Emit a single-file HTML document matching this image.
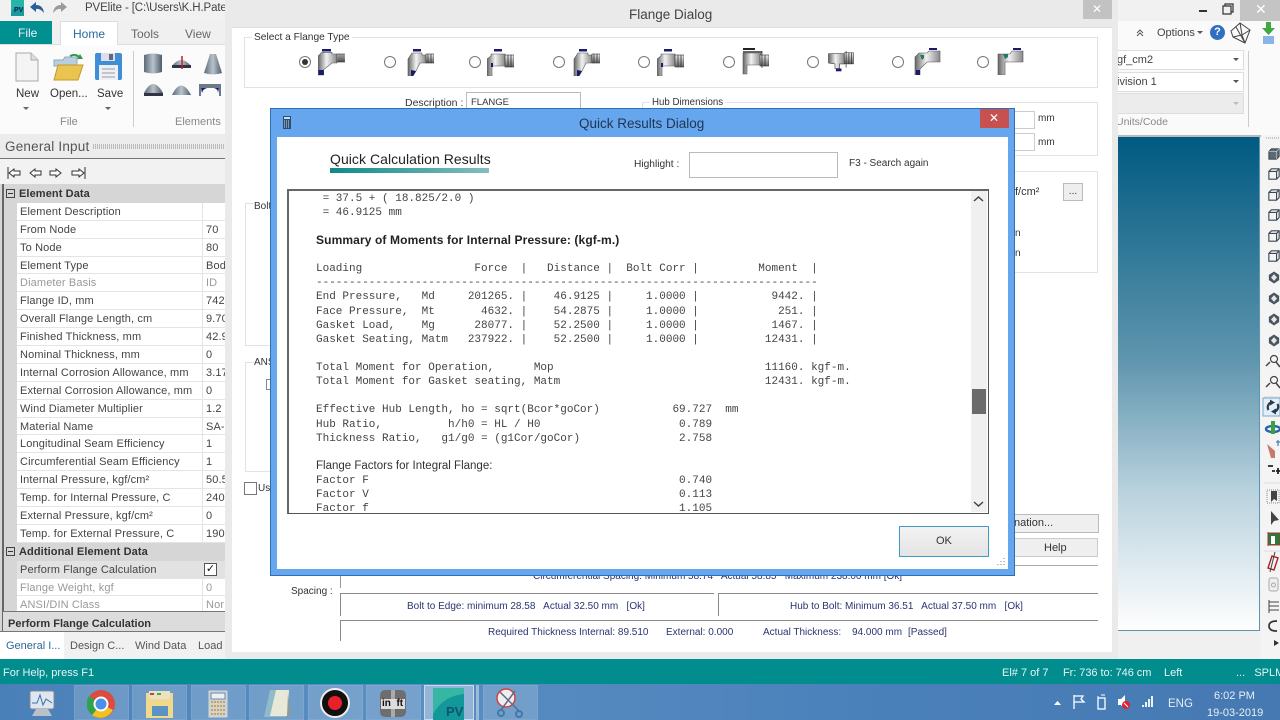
<!DOCTYPE html>
<html><head><meta charset="utf-8"><title>Quick Results Dialog</title>
<style>
html,body{margin:0;padding:0;width:1280px;height:720px;overflow:hidden;background:#f0f0f0}
body{position:relative;font:10.2px/12px "Liberation Sans",sans-serif;color:#333;filter:blur(.3px)}
div,span,svg,pre{position:absolute}
.t{white-space:pre;line-height:12px}
.b{box-sizing:border-box}
.r{position:relative;height:17.9px;box-sizing:border-box;border-bottom:1px solid #e4e4e4;background:#fff;margin-left:13px;width:208px;font-size:11px}
.r span{top:3px;white-space:pre;letter-spacing:.13px;color:#444}
.r .l{left:3px}.r .v{left:189px;width:19px;overflow:hidden}
.r i{position:absolute;left:185px;top:0;bottom:0;width:1px;background:#e4e4e4}
.g span{color:#999}
.h{position:relative;height:17.9px;background:#d6d6d6;width:220px;font-weight:bold;font-size:11px}
.h span{left:15px;top:3px;color:#333;white-space:pre;letter-spacing:.1px}
.h b{position:absolute;left:2px;top:4px;width:9px;height:9px;border:1px solid #444;box-sizing:border-box}
.h b:after{content:"";position:absolute;left:1px;top:3px;width:5px;height:1px;background:#333}
.grp{box-sizing:border-box;border:1px solid #e2e2e2;background:#fff}
.rad{width:12px;height:12px;border:1px solid #777;border-radius:50%;box-sizing:border-box;background:#fff;top:56px}
.mono{left:27px;top:.5px;margin:0;font:11px/14.13px "Liberation Mono",monospace;color:#444;white-space:pre}
.tb{top:685px;width:55px;height:35px;background:rgba(255,255,255,.17);box-shadow:inset 0 0 0 1px rgba(255,255,255,.08)}
.n{color:#2b3472;font-size:10px}
.hl{background:#8a8a8a}
.w{color:#e8f4f4;font-size:11px}
.u{font-size:11px}
</style></head><body>
<svg width="0" height="0" style="left:0;top:0">
<defs>
<linearGradient id="gm" x1="0" x2="1" y1="0" y2="0"><stop offset="0" stop-color="#666"/><stop offset=".45" stop-color="#f2f2f2"/><stop offset="1" stop-color="#888"/></linearGradient>
<linearGradient id="gy" x1="0" x2="0" y1="0" y2="1"><stop offset="0" stop-color="#eee"/><stop offset="1" stop-color="#666"/></linearGradient>
<symbol id="f1" viewBox="0 0 27 27"><rect x="4" y="0" width="9" height="2.5" fill="#1a1a6e"/><path d="M0 7L4 3.300H14V5H19V14H14L5.700 20.700V26H0Z" fill="url(#gm)" stroke="#555" stroke-width=".6"/><rect x="19" y="5" width="8" height="8" fill="url(#gy)" stroke="#333" stroke-width=".6"/><path d="M21 5V13M23 5V13M25 5V13" stroke="#222" stroke-width=".7"/><path d="M.5 26V21H5.700V26Z" fill="#1a1a6e"/></symbol>
<symbol id="f2" viewBox="0 0 27 27"><rect x="6" y="0" width="8" height="2.5" fill="#1a1a6e"/><path d="M1 10L5 4H15V6H19V14H13L9 22 6 27H1Z" fill="url(#gm)" stroke="#555" stroke-width=".6"/><rect x="19" y="5" width="8" height="9" fill="url(#gy)" stroke="#333" stroke-width=".6"/><path d="M21 5V14M24 5V14" stroke="#222" stroke-width=".7"/><path d="M4 27V21L9 22 6 27Z" fill="#1a1a6e"/></symbol>
<symbol id="f3" viewBox="0 0 27 27"><rect x="7" y="0" width="8" height="2.5" fill="#1a1a6e"/><path d="M0 27V10L4 7V5H18V17H5V27Z" fill="url(#gm)" stroke="#555" stroke-width=".6"/><rect x="18" y="6" width="9" height="12" fill="url(#gy)" stroke="#333" stroke-width=".6"/><path d="M21 6V18M24 6V18" stroke="#222" stroke-width=".7"/><rect x="4" y="14" width="2" height="4" fill="#1a1a6e"/></symbol>
<symbol id="f4" viewBox="0 0 27 27"><rect x="1" y="0" width="12" height="2" fill="#222"/><rect x="1" y="3" width="19" height="2" fill="#666"/><path d="M1 5H19V17H5V26H1Z" fill="url(#gm)" stroke="#555" stroke-width=".6"/><rect x="18" y="7" width="9" height="11" fill="url(#gy)" stroke="#333" stroke-width=".6"/><path d="M20 3V20M23 7V18" stroke="#222" stroke-width=".7"/></symbol>
<symbol id="f5" viewBox="0 0 27 27"><path d="M0 4H17V15H12V20H7V15L0 14Z" fill="url(#gm)" stroke="#444" stroke-width=".7"/><rect x="17" y="3" width="10" height="12" fill="url(#gy)" stroke="#333" stroke-width=".6"/><path d="M19 1V19M22 3V15M25 3V15" stroke="#222" stroke-width=".7"/><rect x="8" y="20" width="6" height="3" fill="#1a1a6e"/></symbol>
<symbol id="f6" viewBox="0 0 27 27"><rect x="15" y="0" width="8" height="2" fill="#1a1a6e"/><path d="M1 27V9L5 5H13L15 3H26V14H13L6 21V27Z" fill="url(#gm)" stroke="#555" stroke-width=".6"/><path d="M6 7H10V10L8 12Z" fill="#1f7a6a"/><rect x="2" y="22" width="4" height="5" fill="#1a1a6e"/></symbol>
<symbol id="f7" viewBox="0 0 27 27"><rect x="16" y="0" width="8" height="2" fill="#1a1a6e"/><path d="M1 27V6H13L15 3H26V14H8V27Z" fill="url(#gm)" stroke="#555" stroke-width=".6"/><path d="M6 6H11V9L8 11Z" fill="#1f7a6a"/></symbol>
<symbol id="cube" viewBox="0 0 14 14"><path d="M1 4L4 1H13V10L10 13H1ZM1 4H10V13M10 4L13 1" fill="none" stroke="#3a4652" stroke-width="1.3"/></symbol>
<symbol id="cubef" viewBox="0 0 14 14"><path d="M1 4L4 1H13V10L10 13H1Z" fill="#5c6a78" stroke="#333" stroke-width="1"/><path d="M1 4H10V13M10 4L13 1" fill="none" stroke="#cdd" stroke-width=".7"/></symbol>
<symbol id="dia" viewBox="0 0 14 14"><path d="M7 0L13 4V10L7 14 1 10V4Z" fill="#4a5560"/><path d="M7 3L10.5 7 7 11 3.5 7Z" fill="#e6e6e6"/></symbol>
</defs></svg>

<!-- main window top -->
<div style="left:0;top:0;width:1280px;height:21px;background:#f1f1f1"></div>
<svg style="left:11px;top:0" width="13" height="16" viewBox="0 0 13 16"><rect width="13" height="16" fill="#1a9a9a"/><path d="M0 0H13V8Q5 4 0 12Z" fill="#27b5a8"/></svg>
<span class="t" style="left:14px;top:7px;font:bold 7px/8px 'Liberation Sans',sans-serif;color:#125">PV</span>
<svg style="left:29px;top:1px" width="40" height="14" viewBox="0 0 40 14"><path d="M1 6L7 1V4Q14 4 15 12 11 7 7 8V11Z" fill="#2a5f9c"/><path d="M38 6L32 1V4Q25 4 24 12 28 7 32 8V11Z" fill="#9a9a9a"/></svg>
<span class="t" style="left:85px;top:2px;width:140px;overflow:hidden;font-size:11.500px;color:#444;letter-spacing:-.12px">PVElite - [C:\Users\K.H.Patel'</span>

<!-- tabs -->
<div style="left:0;top:21px;width:52px;height:24px;background:#019090"></div>
<span class="t" style="left:18px;top:27px;color:#eef;font-size:12px">File</span>
<div style="left:0;top:44px;width:226px;height:1px;background:#ddd"></div>
<div class="b" style="left:60px;top:21px;width:58px;height:24px;background:#fff;border:1px solid #ddd;border-bottom:0"></div>
<span class="t" style="left:73px;top:28px;color:#2a6a9a;font-size:12px">Home</span>
<span class="t" style="left:131px;top:28px;color:#666;font-size:12px">Tools</span>
<span class="t" style="left:185px;top:28px;color:#666;font-size:12px">View</span>

<!-- ribbon -->
<div style="left:0;top:45px;width:226px;height:89px;background:#fbfbfb"></div>
<svg style="left:15px;top:52px" width="24" height="30" viewBox="0 0 24 30"><path d="M1 1H16L23 8V29H1Z" fill="#f4f4f4" stroke="#aaa"/><path d="M16 1V8H23" fill="#ddd" stroke="#aaa"/></svg>
<svg style="left:53px;top:52px" width="31" height="30" viewBox="0 0 31 30"><path d="M1 8H10L12 5H24V14H1Z" fill="#b7cfe0" stroke="#8fa9bb"/><path d="M5 13H30L25 28H1Z" fill="#eac450" stroke="#c59a2c"/><path d="M17 4Q23 1 27 6" fill="none" stroke="#2f9a4a" stroke-width="2"/><path d="M24 7L30 7 27 2Z" fill="#2f9a4a"/></svg>
<svg style="left:95px;top:53px" width="27" height="27" viewBox="0 0 27 27"><rect x="0" y="0" width="27" height="27" rx="2" fill="#3f8fd6"/><rect x="6" y="0" width="14" height="8" fill="#dde"/><rect x="14" y="1" width="4" height="6" fill="#667"/><rect x="4" y="12" width="19" height="15" fill="#eef0f3"/><path d="M7 16H20M7 20H20M7 24H20" stroke="#99a"/></svg>
<span class="t" style="left:16px;top:88px;font-size:11.500px;color:#333">New</span>
<span class="t" style="left:50px;top:88px;font-size:11.500px;color:#333">Open...</span>
<span class="t" style="left:97px;top:88px;font-size:11.500px;color:#333">Save</span>
<svg style="left:23px;top:107px" width="90" height="5" viewBox="0 0 90 5"><path d="M0 0H6L3 3ZM82 0H88L85 3Z" fill="#666"/></svg>
<span class="t u" style="left:60px;top:116px;color:#888">File</span>
<span class="t u" style="left:175px;top:116px;color:#888">Elements</span>
<div style="left:133px;top:51px;width:1px;height:76px;background:#ccc"></div>
<svg style="left:143px;top:52px" width="80" height="46" viewBox="0 0 80 46">
<defs><linearGradient id="cy" x1="0" x2="1" y1="0" y2="0"><stop offset="0" stop-color="#5d6b78"/><stop offset=".5" stop-color="#b8c2cb"/><stop offset="1" stop-color="#4e5c68"/></linearGradient></defs>
<path d="M1 3Q10 0 19 3V20Q10 23 1 20Z" fill="url(#cy)"/>
<path d="M29 14Q38 2 48 14Z" fill="url(#cy)"/><rect x="29" y="13" width="19" height="3" fill="#334"/><path d="M39 4V17" stroke="#b22" stroke-width="1.5"/>
<path d="M61 21L67 2H73L79 21Q70 24 61 21Z" fill="url(#cy)"/>
<path d="M1 41Q10 23 20 41Z" fill="url(#cy)"/><rect x="1" y="41" width="19" height="3" fill="#334"/>
<path d="M29 43Q38 24 48 43Z" fill="url(#cy)"/>
<path d="M56 32H78V44H76V36H58V44H56Z" fill="#6b7a88"/><path d="M58 36H64Q60 37 59 41ZM76 36H71Q75 37 75 41Z" fill="#1a1a80"/>
</svg>

<!-- General input -->
<div style="left:0;top:134px;width:226px;height:50px;background:#ececec"></div>
<div style="left:0;top:158px;width:226px;height:26px;background:#f2f2f2;border-top:1px solid #777"></div>
<span class="t" style="left:5px;top:139px;font-size:13.500px;line-height:15px;color:#555;letter-spacing:.2px">General Input</span>
<div style="left:93px;top:144px;width:132px;height:5px;background:repeating-linear-gradient(90deg,#bbb 0 1px,transparent 1px 2px)"></div>
<svg style="left:7px;top:166px" width="80" height="14" viewBox="0 0 80 14"><g fill="#fff" stroke="#333" stroke-width="1"><path d="M1 1V13" /><path d="M2 7L7 3V5H13V9H7V11Z"/><path d="M23 7L28 3V5H34V9H28V11Z"/><path d="M56 5H50V9H56V11L61 7 56 3Z" transform="translate(-7 0)"/><path d="M72 5H65V9H72V11L77 7 72 3Z"/><path d="M78 1V13"/></g></svg>

<!-- left grid -->
<div style="left:0;top:184px;width:226px;height:448px;background:#d6d6d6"></div>
<div style="left:2px;top:184px;width:2px;height:447px;background:#666"></div>
<div style="left:4px;top:185px;width:222px;height:440px;overflow:hidden">
<div style="left:0;top:0;width:222px;height:440px">
<div class="h"><b></b><span>Element Data</span></div>
<div class="r"><i></i><span class="l">Element Description</span></div>
<div class="r"><i></i><span class="l">From Node</span><span class="v">70</span></div>
<div class="r"><i></i><span class="l">To Node</span><span class="v">80</span></div>
<div class="r"><i></i><span class="l">Element Type</span><span class="v">Bod</span></div>
<div class="r g"><i></i><span class="l">Diameter Basis</span><span class="v">ID</span></div>
<div class="r"><i></i><span class="l">Flange ID, mm</span><span class="v">742</span></div>
<div class="r"><i></i><span class="l">Overall Flange Length, cm</span><span class="v">9.70</span></div>
<div class="r"><i></i><span class="l">Finished Thickness, mm</span><span class="v">42.9</span></div>
<div class="r"><i></i><span class="l">Nominal Thickness, mm</span><span class="v">0</span></div>
<div class="r"><i></i><span class="l">Internal Corrosion Allowance, mm</span><span class="v">3.17</span></div>
<div class="r"><i></i><span class="l">External Corrosion Allowance, mm</span><span class="v">0</span></div>
<div class="r"><i></i><span class="l">Wind Diameter Multiplier</span><span class="v">1.2</span></div>
<div class="r"><i></i><span class="l">Material Name</span><span class="v">SA-</span></div>
<div class="r"><i></i><span class="l">Longitudinal Seam Efficiency</span><span class="v">1</span></div>
<div class="r"><i></i><span class="l">Circumferential Seam Efficiency</span><span class="v">1</span></div>
<div class="r"><i></i><span class="l">Internal Pressure, kgf/cm²</span><span class="v">50.5</span></div>
<div class="r"><i></i><span class="l">Temp. for Internal Pressure, C</span><span class="v">240</span></div>
<div class="r"><i></i><span class="l">External Pressure, kgf/cm²</span><span class="v">0</span></div>
<div class="r"><i></i><span class="l">Temp. for External Pressure, C</span><span class="v">190</span></div>
<div class="h"><b></b><span>Additional Element Data</span></div>
<div class="r" style="background:#e2e2e2"><i></i><span class="l">Perform Flange Calculation</span><span class="v" style="left:187px;top:2px;width:11px;height:11px;border:1px solid #555;background:#fff;font-size:11px;line-height:11px;color:#111;text-align:center">✓</span></div>
<div class="r g"><i></i><span class="l">Flange Weight, kgf</span><span class="v">0</span></div>
<div class="r g"><i></i><span class="l">ANSI/DIN Class</span><span class="v">Nor</span></div>
</div></div>
<div style="left:3px;top:611px;width:223px;height:1px;background:#777"></div>
<div style="left:3px;top:612px;width:223px;height:19px;background:#dcdcdc"></div>
<span class="t u" style="left:8px;top:618px;font-weight:bold;color:#333">Perform Flange Calculation</span>
<div style="left:0;top:631px;width:226px;height:1px;background:#777"></div>

<!-- bottom tabs -->
<div style="left:0;top:632px;width:226px;height:27px;background:#f1f1f1"></div>
<div style="left:0;top:632px;width:64px;height:27px;background:#fff"></div>
<span class="t u" style="left:6px;top:640px;color:#2a6a9a">General I...</span>
<span class="t u" style="left:70px;top:640px;color:#555">Design C...</span>
<span class="t u" style="left:135px;top:640px;color:#555">Wind Data</span>
<span class="t u" style="left:198px;top:640px;color:#555">Load</span>

<!-- right ribbon -->
<div style="left:1118px;top:21px;width:162px;height:114px;background:#fafafa"></div>
<div style="left:1118px;top:135px;width:162px;height:2px;background:#bbb"></div>
<div style="left:1240px;top:0;width:40px;height:21px;background:#c4c4c4"></div>
<span class="t" style="left:1255px;top:2px;color:#fff;font-size:14px;line-height:14px">✕</span>
<div style="left:1199px;top:10px;width:8px;height:2px;background:#333"></div>
<svg style="left:1222px;top:3px" width="12" height="12" viewBox="0 0 12 12"><path d="M3 3V1H11V9H9M1 3H9V11H1Z" fill="none" stroke="#333" stroke-width="1.2"/></svg>
<svg style="left:1135px;top:28px" width="10" height="10" viewBox="0 0 10 10"><path d="M2 5L5 2 8 5M2 8L5 5 8 8" fill="none" stroke="#555"/></svg>
<span class="t" style="left:1157px;top:27px;color:#444;font-size:11px">Options</span>
<svg style="left:1197px;top:31px" width="6" height="4" viewBox="0 0 6 4"><path d="M0 0H6L3 3Z" fill="#555"/></svg>
<div style="left:1210px;top:25px;width:15px;height:15px;border-radius:50%;background:#2f6fc0;color:#fff;font:bold 11px/15px 'Liberation Sans',sans-serif;text-align:center">?</div>
<svg style="left:1230px;top:21px" width="22" height="23" viewBox="0 0 22 23"><path d="M1 10L10 2 20 9 15 22 3 16ZM10 2L12 14 3 16M12 14L20 9M12 14L15 22M6 6L15 22" fill="none" stroke="#444"/></svg>
<svg style="left:1262px;top:22px" width="14" height="22" viewBox="0 0 14 22"><path d="M4 0H9V6H13L6.5 13 0 6H4Z" fill="#3fa83f"/><rect x="1" y="14" width="11" height="8" fill="#8ab4e6"/></svg>
<div class="b" style="left:1118px;top:50px;width:126px;height:20px;background:#fff;border:1px solid #ddd;border-left:0"></div>
<div class="b" style="left:1118px;top:72px;width:126px;height:20px;background:#fff;border:1px solid #ddd;border-left:0"></div>
<div class="b" style="left:1118px;top:93px;width:126px;height:21px;background:#ececec;border:1px solid #ddd;border-left:0"></div>
<span class="t u" style="left:1117px;top:54px;color:#444">gf_cm2</span>
<span class="t u" style="left:1117px;top:76px;color:#444">ivision 1</span>
<svg style="left:1232px;top:57px" width="8" height="48" viewBox="0 0 8 48"><path d="M1 1H7L4 4Z M1 23H7L4 26Z" fill="#555"/><path d="M1 45H7L4 48Z" fill="#bbb"/></svg>
<span class="t" style="left:1116px;top:116px;color:#888;font-size:10.500px">Units/Code</span>
<div style="left:1248px;top:51px;width:1px;height:76px;background:#ccc"></div>

<!-- viewport -->
<div class="b" style="left:1118px;top:137px;width:142px;height:494px;background:linear-gradient(#005a82,#5f95ae 45%,#b9d2de 72%,#fff);border-right:1px solid #5d97ae;border-bottom:1px solid #5d97ae"></div>
<div style="left:1261px;top:135px;width:19px;height:524px;background:#f4f4f4"></div>
<svg style="left:1266px;top:137px" width="14" height="4" viewBox="0 0 14 4"><path d="M0 1H14" stroke="#999" stroke-dasharray="1 1"/></svg>
<svg style="left:1262px;top:140px" width="18" height="516" viewBox="0 0 18 516">
<use href="#cubef" x="6" y="8" width="12" height="12"/>
<use href="#cube" x="6" y="28" width="12" height="12"/>
<use href="#cube" x="6" y="49" width="12" height="12"/>
<use href="#cube" x="6" y="69" width="12" height="12"/>
<use href="#cube" x="6" y="90" width="12" height="12"/>
<use href="#cube" x="6" y="110" width="12" height="12"/>
<use href="#dia" x="6" y="131" width="12" height="13"/>
<use href="#dia" x="6" y="152" width="12" height="13"/>
<use href="#dia" x="6" y="173" width="12" height="13"/>
<use href="#dia" x="6" y="194" width="12" height="13"/>
<circle cx="12" cy="219" r="3.5" fill="none" stroke="#444" stroke-width="1.2"/><path d="M14 222L18 227M4 226L8 222" stroke="#444" stroke-width="1.5"/>
<circle cx="12" cy="240" r="3.5" fill="none" stroke="#444" stroke-width="1.2"/><path d="M14 243L18 248M4 247L8 243" stroke="#444" stroke-width="1.5"/>
<path d="M2 257H18" stroke="#ddd"/>
<rect x="1" y="258" width="17" height="18" fill="#e2eef8" stroke="#7aa9cf"/>
<path d="M6.500 270A5.200 5.200 0 0 1 9 262.500M15.500 264A5.200 5.200 0 0 1 13 271.500" fill="none" stroke="#2c3a48" stroke-width="2.200"/><path d="M8 259.500L13 262.500 8 265.500ZM14 268.500L9 271.500 14 274.500Z" fill="#2c3a48"/>
<ellipse cx="11" cy="289" rx="7" ry="3" fill="none" stroke="#2a66b0" stroke-width="2.4"/><path d="M9 281H13V294H9Z" fill="#3aa03a"/>
<path d="M5 304L13 311V318H9Z" fill="#c67a6e"/><path d="M14 302H18M16 300V306" stroke="#2a66b0"/>
<path d="M6 326H11M14 331H18M16 328V334M10 331H13" stroke="#222" stroke-width="1.8"/>
<path d="M2 343H18" stroke="#ddd"/>
<rect x="5" y="350" width="12" height="13" fill="none" stroke="#888" stroke-dasharray="1 1"/><path d="M9 351V362L12 359 15 361V351Z" fill="#444"/>
<path d="M9 371V385L12 381 17 380Z" fill="#444"/>
<path d="M6 392V406M6 393H18V405H6Z" fill="#2a7a3a" stroke="#a33"/><path d="M9 396H13V404H9Z" fill="#fff"/>
<path d="M2 411H18" stroke="#ddd"/>
<path d="M6 428L10 416 16 418 12 430Z" fill="none" stroke="#a22" stroke-width="1.4"/><path d="M13 412L8 432" stroke="#444"/>
<rect x="7" y="438" width="9" height="13" rx="2" fill="#eee" stroke="#aaa"/><circle cx="11.500" cy="445" r="2" fill="none" stroke="#aaa"/>
<path d="M7 460V473M7 462H17M7 470H17M7 466H17" stroke="#444" fill="none"/>
<path d="M15 481Q7 481 7 486T15 491" fill="none" stroke="#333" stroke-width="1.7"/>
<path d="M12 500L17 503 12 506Z" fill="#333"/>
</svg>

<!-- flange dialog -->
<div style="left:225px;top:0;width:893px;height:659px;background:#eaeaea"></div>
<div class="b" style="left:232px;top:27px;width:880px;height:625px;background:#fff;border-top:1px solid #ddd"></div>
<span class="t" style="left:629px;top:7px;font-size:13.500px;line-height:15px;color:#444">Flange Dialog</span>
<div style="left:1083px;top:0;width:29px;height:19px;background:#c2c2c2"></div>
<span class="t" style="left:1092px;top:3px;color:#fff;font-size:12px">✕</span>

<div class="grp" style="left:244px;top:37px;width:854px;height:51px"></div>
<span class="t" style="left:252px;top:32px;background:#fff;padding:0 2px;color:#333">Select a Flange Type</span>
<div class="rad" style="left:299px"></div><div style="left:302px;top:59px;width:6px;height:6px;border-radius:50%;background:#333"></div>
<div class="rad" style="left:384px"></div><div class="rad" style="left:469px"></div><div class="rad" style="left:553px"></div><div class="rad" style="left:638px"></div><div class="rad" style="left:723px"></div><div class="rad" style="left:807px"></div><div class="rad" style="left:892px"></div><div class="rad" style="left:977px"></div>
<svg style="left:318px;top:49px" width="27" height="27"><use href="#f1" width="27" height="27"/></svg>
<svg style="left:407px;top:49px" width="27" height="27"><use href="#f2" width="27" height="27"/></svg>
<svg style="left:487px;top:49px" width="27" height="27"><use href="#f3" width="27" height="27"/></svg>
<svg style="left:573px;top:49px" width="27" height="27"><use href="#f2" width="27" height="27"/></svg>
<svg style="left:657px;top:49px" width="27" height="27"><use href="#f3" width="27" height="27"/></svg>
<svg style="left:742px;top:48px" width="27" height="27"><use href="#f4" width="27" height="27"/></svg>
<svg style="left:828px;top:50px" width="26" height="25"><use href="#f5" width="26" height="25"/></svg>
<svg style="left:914px;top:48px" width="27" height="27"><use href="#f6" width="27" height="27"/></svg>
<svg style="left:997px;top:48px" width="27" height="27"><use href="#f7" width="27" height="27"/></svg>

<span class="t" style="left:405px;top:97px;color:#333;font-size:10.500px">Description :</span>
<div class="b" style="left:466px;top:92px;width:115px;height:24px;border:1px solid #bbb;background:#fff"></div>
<span class="t" style="left:471px;top:97px;font-size:9.500px;color:#333">FLANGE</span>
<div class="grp" style="left:642px;top:102px;width:456px;height:54px"></div>
<span class="t" style="left:650px;top:97px;background:#fff;padding:0 2px;color:#333;font-size:9.700px">Hub Dimensions</span>
<div class="b" style="left:1000px;top:111px;width:35px;height:18px;border:1px solid #ccc;background:#fff"></div>
<div class="b" style="left:1000px;top:133px;width:35px;height:18px;border:1px solid #ccc;background:#fff"></div>
<span class="t" style="left:1038px;top:113px;font-size:10px;color:#333">mm</span>
<span class="t" style="left:1038px;top:137px;font-size:10px;color:#333">mm</span>
<div class="grp" style="left:642px;top:171px;width:456px;height:102px"></div>
<span class="t" style="left:1015px;top:186px;font-size:11px;color:#333">f/cm²</span>
<div class="b" style="left:1063px;top:183px;width:20px;height:18px;border:1px solid #bbb;background:#eee;text-align:center;color:#333;line-height:16px">...</div>
<span class="t" style="left:1015px;top:228px;font-size:10px;color:#333">n</span>
<span class="t" style="left:1015px;top:248px;font-size:10px;color:#333">n</span>
<div class="grp" style="left:245px;top:203px;width:40px;height:143px"></div>
<span class="t" style="left:254px;top:201px;font-size:10px;background:#fff;color:#333">Bolt</span>
<div class="grp" style="left:245px;top:362px;width:40px;height:110px"></div>
<span class="t" style="left:254px;top:357px;font-size:10px;background:#fff;color:#333">ANS</span>
<div class="b" style="left:266px;top:379px;width:10px;height:11px;border:1px solid #888"></div>
<div class="b" style="left:244px;top:482px;width:13px;height:13px;border:1px solid #777;background:#fff"></div>
<span class="t" style="left:258px;top:483px;font-size:10px;color:#333">Us</span>

<div class="b" style="left:1005px;top:514px;width:94px;height:19px;border:1px solid #bbb;background:#efefef"></div>
<span class="t u" style="left:1014px;top:517px;color:#333">nation...</span>
<div class="b" style="left:1005px;top:538px;width:93px;height:19px;border:1px solid #ccc;background:#efefef"></div>
<span class="t u" style="left:1044px;top:542px;color:#333">Help</span>
<div style="left:1008px;top:565px;width:90px;height:1px;background:#aaa"></div>

<div style="left:340px;top:575px;width:1px;height:13px;background:#999"></div>
<span class="t n" style="left:533px;top:571px">Circumferential Spacing: Minimum 58.74   Actual 58.85   Maximum 238.00 mm [Ok]</span>
<span class="t" style="left:291px;top:586px;color:#333;font-size:10px">Spacing :</span>
<div class="hl" style="left:340px;top:593px;width:374px;height:1px"></div>
<div class="hl" style="left:340px;top:593px;width:1px;height:23px"></div>
<div class="hl" style="left:718px;top:593px;width:380px;height:1px"></div>
<div class="hl" style="left:718px;top:593px;width:1px;height:23px"></div>
<span class="t n" style="left:407px;top:601px">Bolt to Edge: minimum 28.58   Actual 32.50 mm   [Ok]</span>
<span class="t n" style="left:790px;top:601px">Hub to Bolt: Minimum 36.51   Actual 37.50 mm   [Ok]</span>
<div class="hl" style="left:340px;top:620px;width:758px;height:1px"></div>
<div class="hl" style="left:340px;top:620px;width:1px;height:21px"></div>
<span class="t n" style="left:488px;top:627px">Required Thickness Internal: 89.510</span>
<span class="t n" style="left:666px;top:627px">External: 0.000</span>
<span class="t n" style="left:763px;top:627px">Actual Thickness:</span>
<span class="t n" style="left:852px;top:627px">94.000 mm</span>
<span class="t n" style="left:908px;top:627px">[Passed]</span>

<!-- status bar -->
<div style="left:0;top:659px;width:1280px;height:25px;background:#018c8e"></div>
<span class="t w" style="left:3px;top:667px">For Help, press F1</span>
<span class="t w" style="left:1002px;top:667px">El# 7 of 7</span>
<span class="t w" style="left:1063px;top:667px;letter-spacing:-.05px">Fr: 736 to: 746 cm</span>
<span class="t w" style="left:1164px;top:667px">Left</span>
<span class="t w" style="left:1236px;top:667px">...   SPLM</span>

<!-- taskbar -->
<div style="left:0;top:684px;width:1280px;height:36px;background:linear-gradient(90deg,#4a80b8,#5a8fc2 30%,#4a80ba 70%,#4679b2)"></div>
<div class="tb" style="left:74px"></div><div class="tb" style="left:132px"></div><div class="tb" style="left:191px"></div><div class="tb" style="left:249px"></div><div class="tb" style="left:308px"></div><div class="tb" style="left:366px"></div>
<div class="tb" style="left:424px;width:50px;background:rgba(255,255,255,.35);box-shadow:inset 0 0 0 1px rgba(255,255,255,.5)"></div><div style="left:476px;top:685px;width:3px;height:35px;background:rgba(255,255,255,.4)"></div>
<div class="tb" style="left:483px"></div>
<svg style="left:28px;top:689px" width="30" height="29" viewBox="0 0 30 29"><rect x="2" y="2" width="24" height="18" rx="2" fill="#dfe6ee" stroke="#889"/><path d="M4 14L9 14 12 6 15 16 18 10 24 14" fill="none" stroke="#3a70b0"/><path d="M8 20H20L24 27H4Z" fill="#b9c0c8"/></svg>
<svg style="left:87px;top:690px" width="28" height="28" viewBox="0 0 28 28"><circle cx="14" cy="14" r="14" fill="#dd4b3e"/><path d="M14 14L26 20A14 14 0 0 1 5 25Z" fill="#f3c11f"/><path d="M14 14L5 25A14 14 0 0 1 2 6Z" fill="#2fa24f"/><circle cx="14" cy="14" r="6.500" fill="#4a8fe8" stroke="#fff" stroke-width="2"/></svg>
<svg style="left:145px;top:690px" width="30" height="28" viewBox="0 0 30 28"><path d="M1 3H28V28H1Z" fill="#f1d98c"/><rect x="4" y="1" width="21" height="8" fill="#e9e2c4"/><rect x="7" y="16" width="16" height="10" fill="#5b93c4"/><rect x="5" y="3" width="4" height="2" fill="#b44"/><rect x="12" y="3" width="4" height="2" fill="#4a4"/></svg>
<svg style="left:208px;top:690px" width="20" height="28" viewBox="0 0 20 28"><rect width="20" height="28" rx="1" fill="#c8d4e0" stroke="#8a9ab0"/><rect x="3" y="3" width="14" height="6" fill="#e8f0f8" stroke="#789"/><path d="M3 12H17M3 16H17M3 20H17M3 24H17" stroke="#d9a23a" stroke-width="2" stroke-dasharray="2 1"/></svg>
<svg style="left:262px;top:689px" width="29" height="29" viewBox="0 0 29 29"><path d="M8 1H27L24 28H2Z" fill="#8fbcc8"/><path d="M14 1H27L26 27H8Z" fill="#e8e8d8"/><path d="M26 4L28 27H25Z" fill="#998"/></svg>
<svg style="left:320px;top:688px" width="30" height="30" viewBox="0 0 30 30"><circle cx="15" cy="15" r="14" fill="#111" stroke="#eee" stroke-width="2"/><circle cx="15" cy="15" r="7" fill="#e8202a"/></svg>
<svg style="left:379px;top:689px" width="28" height="29" viewBox="0 0 28 29"><rect x="1" y="1" width="26" height="27" rx="5" fill="#6e6e6e"/><rect x="12" y="1" width="4" height="27" fill="#aaa"/><rect x="2" y="10" width="24" height="10" fill="#ddd"/></svg>
<span class="t" style="left:382px;top:699px;font:bold 10px/10px 'Liberation Sans',sans-serif;color:#111">in  ft</span>
<svg style="left:433px;top:688px" width="31" height="32" viewBox="0 0 31 32"><rect width="31" height="32" fill="#13989a"/><path d="M0 0H31V6Q10 8 0 26Z" fill="#37b6a6"/></svg>
<span class="t" style="left:446px;top:705px;font:bold 13px/13px 'Liberation Sans',sans-serif;color:#0d5270">PV</span>
<svg style="left:495px;top:688px" width="30" height="30" viewBox="0 0 30 30"><circle cx="11" cy="10" r="9" fill="#eee" stroke="#c44" stroke-width="1.5"/><path d="M5 4L25 24M20 3L6 22" stroke="#668" stroke-width="1.5"/><circle cx="6" cy="25" r="3" fill="none" stroke="#47a" stroke-width="2"/><circle cx="24" cy="26" r="3" fill="none" stroke="#47a" stroke-width="2"/></svg>

<svg style="left:1053px;top:700px" width="10" height="6" viewBox="0 0 10 6"><path d="M1 5H8L4.500 1Z" fill="#fff"/></svg>
<svg style="left:1072px;top:693px" width="100" height="18" viewBox="0 0 100 18"><path d="M2 2V16M2 3H11L9 6 12 9H2" fill="none" stroke="#fff" stroke-width="1.300"/><rect x="26" y="5" width="7" height="11" fill="none" stroke="#fff" stroke-width="1.300"/><path d="M26 3V10M33 2H29" stroke="#fff"/><path d="M46 6H49L53 2V16L49 12H46Z" fill="#fff"/><circle cx="54" cy="12" r="4" fill="#d23"/><path d="M52 10L56 14" stroke="#fff"/><path d="M71 14V12M74 14V9M77 14V6M80 14V3" stroke="#fff" stroke-width="1.800"/></svg>
<span class="t" style="left:1168px;top:698px;color:#e8eef6;font-size:11.500px">ENG</span>
<span class="t u" style="left:1214px;top:690px;color:#e8eef6">6:02 PM</span>
<span class="t u" style="left:1207px;top:707px;color:#e8eef6">19-03-2019</span>

<!-- quick results dialog -->
<div class="b" style="left:270px;top:108px;width:745px;height:468px;background:#65a6ee;border:1px solid #2d6fb5"></div>
<svg style="left:283px;top:116px" width="8" height="13" viewBox="0 0 8 13"><rect width="8" height="13" fill="#2b4f73"/><rect x="1" y="1" width="6" height="2" fill="#cde"/><path d="M1 5H7M1 7H7M1 9H7M1 11H7" stroke="#cde" stroke-dasharray="1 1"/></svg>
<span class="t" style="left:579px;top:116px;font-size:13.500px;line-height:15px;color:#1f3550">Quick Results Dialog</span>
<div style="left:980px;top:109px;width:29px;height:19px;background:#c75050"></div>
<span class="t" style="left:989px;top:112px;color:#fff;font-size:12px">✕</span>
<div style="left:277px;top:137px;width:731px;height:432px;background:#fff"></div>

<span class="t" style="left:330px;top:152px;font-size:14px;line-height:15px;color:#222;letter-spacing:.05px">Quick Calculation Results</span>
<div style="left:330px;top:168px;width:159px;height:5px;background:linear-gradient(90deg,#0e8a8a,#86bdbd)"></div>
<span class="t" style="left:634px;top:159px;color:#333">Highlight :</span>
<div class="b" style="left:689px;top:152px;width:149px;height:26px;border:1px solid #bbb;background:#fff"></div>
<span class="t" style="left:849px;top:158px;color:#333;font-size:10px">F3 - Search again</span>

<div class="b" style="left:287px;top:189px;width:702px;height:325px;border:1px solid #555;border-top:2px solid #666;border-left:2px solid #666;background:#fff"></div>
<div style="left:971px;top:191px;width:16px;height:321px;background:#f0f0f0"></div>
<svg style="left:973px;top:195px" width="11" height="8" viewBox="0 0 11 8"><path d="M1 6L5.500 2 10 6" fill="none" stroke="#444" stroke-width="1.500"/></svg>
<svg style="left:973px;top:500px" width="11" height="8" viewBox="0 0 11 8"><path d="M1 2L5.500 6 10 2" fill="none" stroke="#444" stroke-width="1.500"/></svg>
<div style="left:972px;top:389px;width:14px;height:25px;background:#6b6b6b"></div>

<div style="left:289px;top:191px;width:680px;height:320px;overflow:hidden">
<pre class="mono">
 = 37.5 + ( 18.825/2.0 )
 = 46.9125 mm



Loading                 Force  |   Distance |  Bolt Corr |         Moment  |
----------------------------------------------------------------------------
End Pressure,   Md     201265. |    46.9125 |     1.0000 |           9442. |
Face Pressure,  Mt       4632. |    54.2875 |     1.0000 |            251. |
Gasket Load,    Mg      28077. |    52.2500 |     1.0000 |           1467. |
Gasket Seating, Matm   237922. |    52.2500 |     1.0000 |          12431. |

Total Moment for Operation,      Mop                                11160. kgf-m.
Total Moment for Gasket seating, Matm                               12431. kgf-m.

Effective Hub Length, ho = sqrt(Bcor*goCor)           69.727  mm
Hub Ratio,          h/h0 = HL / H0                     0.789
Thickness Ratio,   g1/g0 = (g1Cor/goCor)               2.758


Factor F                                               0.740
Factor V                                               0.113
Factor f                                               1.105</pre>
<span class="t" style="left:27px;top:43px;font-weight:bold;font-size:12px;letter-spacing:.12px;color:#222">Summary of Moments for Internal Pressure: (kgf-m.)</span>
<span class="t" style="left:27px;top:269px;font-size:11.500px;color:#333">Flange Factors for Integral Flange:</span>
</div>

<div class="b" style="left:899px;top:526px;width:90px;height:31px;border:1px solid #3f9ac9;background:linear-gradient(#f2f2f2,#e4e4e4)"></div>
<span class="t u" style="left:936px;top:535px;color:#333">OK</span>
<svg style="left:995px;top:557px" width="11" height="11" viewBox="0 0 11 11"><path d="M9 1V2M6 4V5M9 4V5M3 7V8M6 7V8M9 7V8" stroke="#aaa" stroke-width="1.500"/></svg>
</body></html>
